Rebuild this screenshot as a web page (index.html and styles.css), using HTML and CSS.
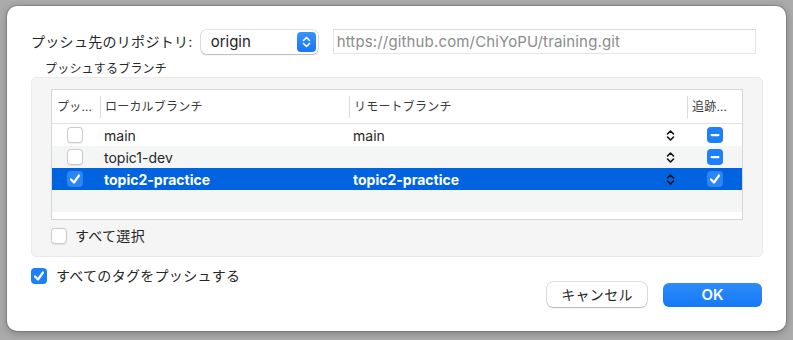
FILE: index.html
```html
<!DOCTYPE html>
<html lang="ja">
<head>
<meta charset="utf-8">
<link rel="stylesheet" href="styles.css">
</head>
<body>
<div class="window">
  <div class="repo-row">
    <span class="repo-label">プッシュ先のリポジトリ:</span>
    <div class="popup">
      <span class="popup-text">origin</span>
      <span class="popup-btn"><svg width="9" height="12" viewBox="0 0 9 12"><path d="M1.5 4.5 L4.5 1.5 L7.5 4.5 M1.5 7.5 L4.5 10.5 L7.5 7.5" stroke="#fff" stroke-width="1.6" fill="none" stroke-linecap="round" stroke-linejoin="round"/></svg></span>
    </div>
    <div class="url-field">https://github.com/ChiYoPU/training.git</div>
  </div>

  <div class="group-title">プッシュするブランチ</div>
  <div class="group">
    <div class="table">
      <div class="trow thead">
        <div class="cell c1"><span class="hcell">プッ…</span></div>
        <div class="cell c2"><span class="hcell sep">ローカルブランチ</span></div>
        <div class="cell c3"><span class="hcell sep">リモートブランチ</span></div>
        <div class="cell c4"><span class="hcell sep">追跡…</span></div>
      </div>

      <div class="trow">
        <div class="cell c1"><span class="cb"></span></div>
        <div class="cell c2">main</div>
        <div class="cell c3"><span>main</span><svg class="chev" width="9" height="13" viewBox="0 0 9 13"><path d="M1.5 5 L4.5 2 L7.5 5 M1.5 8 L4.5 11 L7.5 8" stroke="#111" stroke-width="1.6" fill="none" stroke-linecap="round" stroke-linejoin="round"/></svg></div>
        <div class="cell c4"><span class="cb on"><svg width="16" height="16" viewBox="0 0 16 16"><rect x="3.5" y="7" width="9" height="2.2" rx="1.1" fill="#fff"/></svg></span></div>
      </div>

      <div class="trow alt">
        <div class="cell c1"><span class="cb"></span></div>
        <div class="cell c2">topic1-dev</div>
        <div class="cell c3"><span></span><svg class="chev" width="9" height="13" viewBox="0 0 9 13"><path d="M1.5 5 L4.5 2 L7.5 5 M1.5 8 L4.5 11 L7.5 8" stroke="#111" stroke-width="1.6" fill="none" stroke-linecap="round" stroke-linejoin="round"/></svg></div>
        <div class="cell c4"><span class="cb on"><svg width="16" height="16" viewBox="0 0 16 16"><rect x="3.5" y="7" width="9" height="2.2" rx="1.1" fill="#fff"/></svg></span></div>
      </div>

      <div class="trow selected">
        <div class="cell c1"><span class="cb on sel"><svg width="16" height="16" viewBox="0 0 16 16"><path d="M4 8.5 L7 11.5 L12 4.5" stroke="#fff" stroke-width="2.2" fill="none" stroke-linecap="round" stroke-linejoin="round"/></svg></span></div>
        <div class="cell c2">topic2-practice</div>
        <div class="cell c3"><span>topic2-practice</span><svg class="chev" width="9" height="13" viewBox="0 0 9 13"><path d="M1.5 5 L4.5 2 L7.5 5 M1.5 8 L4.5 11 L7.5 8" stroke="#111" stroke-width="1.6" fill="none" stroke-linecap="round" stroke-linejoin="round"/></svg></div>
        <div class="cell c4"><span class="cb on sel"><svg width="16" height="16" viewBox="0 0 16 16"><path d="M4 8.5 L7 11.5 L12 4.5" stroke="#fff" stroke-width="2.2" fill="none" stroke-linecap="round" stroke-linejoin="round"/></svg></span></div>
      </div>

      <div class="trow alt empty"></div>
    </div>

    <label class="check-row select-all"><span class="cb"></span><span>すべて選択</span></label>
  </div>

  <div class="bottom">
    <label class="check-row tags"><span class="cb on"><svg width="16" height="16" viewBox="0 0 16 16"><path d="M4 8.5 L7 11.5 L12 4.5" stroke="#fff" stroke-width="2.2" fill="none" stroke-linecap="round" stroke-linejoin="round"/></svg></span><span>すべてのタグをプッシュする</span></label>
    <div class="buttons">
      <button class="btn cancel">キャンセル</button>
      <button class="btn ok">OK</button>
    </div>
  </div>
</div>
</body>
</html>
```

FILE: styles.css
```css
* { box-sizing: border-box; }

html, body {
  margin: 0;
  padding: 0;
}

body {
  width: 793px;
  height: 340px;
  overflow: hidden;
  background: #ababab;
  font-family: "Inter", "Noto Sans CJK JP", sans-serif;
  color: #262626;
  padding: 6px 0 0 7px;
}

.window {
  width: 779px;
  height: 325px;
  background: #ffffff;
  border-radius: 10px;
  box-shadow: 0 0 0 1px rgba(0,0,0,0.14), 0 2px 8px rgba(0,0,0,0.28);
  padding: 23px 23px 0 24px;
}

/* top row */
.repo-row {
  display: flex;
  align-items: center;
  height: 25px;
}

.repo-label {
  font-size: 14px;
  line-height: 20px;
  letter-spacing: 0.3px;
  color: #262626;
  margin-right: 8px;
  white-space: nowrap;
}

.popup {
  width: 117px;
  height: 24px;
  background: #fff;
  border-radius: 5px;
  box-shadow: 0 0 0 0.5px rgba(0,0,0,0.22), 0 1px 1.5px rgba(0,0,0,0.18);
  display: flex;
  align-items: center;
  justify-content: space-between;
  padding: 0 2px 0 10px;
}

.popup-text {
  font-size: 15px;
  line-height: 20px;
  color: #1e1e1e;
}

.popup-btn {
  width: 19px;
  height: 20px;
  border-radius: 4px;
  background: linear-gradient(#3a93fb, #1577f4);
  display: flex;
  align-items: center;
  justify-content: center;
}

.url-field {
  margin-left: 15px;
  width: 423px;
  height: 25px;
  border: 1px solid #e4e4e4;
  border-top-color: #d9d9d9;
  background: #fff;
  color: #8c8c8c;
  font-size: 15px;
  letter-spacing: 0.15px;
  line-height: 23px;
  padding-left: 3px;
  white-space: nowrap;
}

/* group */
.group-title {
  margin: 7px 0 0 14px;
  font-size: 12px;
  line-height: 16px;
  letter-spacing: 0.2px;
  color: #2a2a2a;
}

.group {
  width: 732px;
  height: 180px;
  background: #f5f5f5;
  border: 1px solid #ebebeb;
  border-radius: 5px;
  padding: 11px 19px 0 19px;
}

.table {
  width: 692px;
  height: 131px;
  background: #fff;
  border: 1px solid #d6d6d6;
}

.trow {
  display: grid;
  grid-template-columns: 48px 249px 338px 1fr;
  height: 22px;
  align-items: center;
  font-size: 14px;
}

.trow.alt { background: #f4f5f5; }

.trow.selected {
  background: #0263e0;
  color: #fff;
  font-weight: 700;
}

.thead {
  height: 34px;
  border-bottom: 1px solid #e2e2e2;
  font-size: 12px;
  letter-spacing: 0.2px;
  color: #3a3a3a;
}

.cell {
  height: 100%;
  display: flex;
  align-items: center;
  white-space: nowrap;
  overflow: hidden;
}

.hcell {
  display: flex;
  align-items: center;
  height: 22px;
  width: 100%;
  line-height: 16px;
}

.thead .c1 .hcell { padding-left: 5px; }
.hcell.sep {
  border-left: 1px solid #dcdcdc;
  padding-left: 4px;
}

.trow:not(.thead) .c1 { justify-content: center; padding-right: 2px; }
.trow:not(.thead) .c2 { padding-left: 4px; }
.trow:not(.thead) .c3 {
  padding-left: 4px;
  padding-right: 12px;
  justify-content: space-between;
}
.trow:not(.thead) .c4 { justify-content: center; padding-left: 1px; }

/* checkboxes */
.cb {
  width: 16px;
  height: 16px;
  border-radius: 4px;
  background: #fff;
  box-shadow: inset 0 0 0 1px #cbcbcb, 0 0.5px 1px rgba(0,0,0,0.08);
  display: inline-flex;
  flex: none;
}

.cb.on {
  background: #1b80f9;
  box-shadow: none;
}

.cb.sel {
  background: #2a86f6;
}

.check-row {
  display: flex;
  align-items: center;
  font-size: 14px;
  line-height: 16px;
  letter-spacing: 0.3px;
  color: #262626;
}

.select-all {
  margin-top: 8px;
  gap: 8px;
}

/* bottom */
.bottom {
  display: flex;
  justify-content: space-between;
  align-items: flex-start;
  margin-top: 11px;
}

.tags { gap: 9px; }

.buttons {
  display: flex;
  gap: 16px;
  margin-top: 14px;
  margin-right: 1px;
  align-items: center;
}

.btn {
  font-family: "Inter", "Noto Sans CJK JP", sans-serif;
  border: none;
  margin: 0;
  padding: 0;
  height: 25px;
  border-radius: 6px;
  font-size: 14px;
  line-height: 20px;
}

.cancel {
  width: 100px;
  background: #fff;
  color: #262626;
  letter-spacing: 0.3px;
  box-shadow: 0 0 0 0.5px rgba(0,0,0,0.22), 0 1px 1.5px rgba(0,0,0,0.2);
}

.ok {
  width: 99px;
  height: 24px;
  background: linear-gradient(#2e8cfb, #1479f5);
  color: #fff;
  font-size: 15px;
  font-weight: 600;
}
```
